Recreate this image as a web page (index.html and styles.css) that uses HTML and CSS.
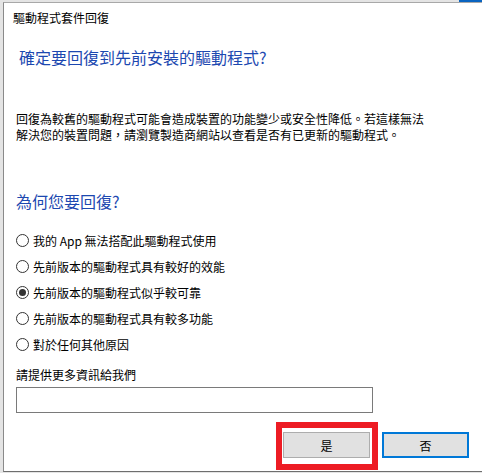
FILE: index.html
```html
<!DOCTYPE html>
<html lang="zh-Hant">
<head>
    <meta charset="UTF-8">
    <meta name="viewport" content="width=device-width, initial-scale=1.0">
    <title>驅動程式套件回復</title>
    <link rel="stylesheet" href="styles.css">
</head>
<body>
    <div class="topbar"><span class="accent"></span></div>
    <div class="window">
        <div class="title">驅動程式套件回復</div>
        <div class="heading">確定要回復到先前安裝的驅動程式?</div>
        <p class="desc">回復為較舊的驅動程式可能會造成裝置的功能變少或安全性降低。若這樣無法<br>解決您的裝置問題，請瀏覽製造商網站以查看是否有已更新的驅動程式。</p>
        <div class="subheading">為何您要回復?</div>
        <div class="reasons">
            <label class="reason"><input type="radio" name="reason">我的 App 無法搭配此驅動程式使用</label>
            <label class="reason"><input type="radio" name="reason">先前版本的驅動程式具有較好的效能</label>
            <label class="reason"><input type="radio" name="reason" checked>先前版本的驅動程式似乎較可靠</label>
            <label class="reason"><input type="radio" name="reason">先前版本的驅動程式具有較多功能</label>
            <label class="reason"><input type="radio" name="reason">對於任何其他原因</label>
        </div>
        <div class="more-label">請提供更多資訊給我們</div>
        <input type="text" class="more-input">
        <div class="actions">
            <div class="highlight"><button class="button">是</button></div>
            <button class="button button_default">否</button>
        </div>
    </div>
</body>
</html>
```

FILE: styles.css
```css
body {
    margin: 0;
    background-color: #e4e4e4;
    font-family: "Noto Sans CJK TC", "Noto Sans", sans-serif;
    font-size: 12px;
    color: #000;
}
.topbar {
    height: 2px;
    display: flex;
}
.accent {
    margin-left: auto;
    width: 23px;
    background-color: #0a64c0;
}
.window {
    margin-left: 3px;
    height: 468px;
    background-color: #fff;
    border-left: 1px solid #8a8a8a;
    border-top: 1px solid #a8a8a8;
    border-bottom: 1px solid #6e6e6e;
    padding-left: 12px;
    box-sizing: content-box;
    display: flex;
    flex-direction: column;
}
.title {
    margin-top: 5px;
    margin-left: -3px;
    line-height: 20px;
}
.heading {
    margin-top: 18px;
    margin-left: 3px;
    font-size: 16px;
    line-height: 22px;
    color: #1c48b0;
}
.desc {
    margin: 43px 0 0;
    line-height: 16px;
}
.subheading {
    margin-top: 47px;
    font-size: 16px;
    line-height: 22px;
    color: #1c48b0;
}
.reasons {
    margin-top: 15px;
    display: flex;
    flex-direction: column;
}
.reason {
    height: 26px;
    display: flex;
    align-items: center;
    gap: 4px;
}
.reason input {
    appearance: none;
    margin: 0;
    width: 13px;
    height: 13px;
    border: 1px solid #333;
    border-radius: 50%;
    background-color: #fff;
    display: flex;
    align-items: center;
    justify-content: center;
}
.reason input:checked::after {
    content: "";
    width: 7px;
    height: 7px;
    border-radius: 50%;
    background-color: #333;
}
.more-label {
    margin-top: 10px;
    line-height: 16px;
}
.more-input {
    margin-top: 4px;
    width: 357px;
    height: 26px;
    box-sizing: border-box;
    border: 1px solid #7a7a7a;
    padding: 0 4px;
    font-family: inherit;
}
.actions {
    margin-top: 9px;
    margin-right: 13px;
    display: flex;
    justify-content: flex-end;
    align-items: flex-start;
    gap: 4px;
}
.highlight {
    border: 6px solid #ed1c24;
    padding: 4px 2px 6px 1px;
}
.button {
    width: 87px;
    height: 26px;
    background-color: #e1e1e1;
    border: 1px solid #adadad;
    font-family: inherit;
    font-size: 12px;
    color: #000;
    padding: 0;
    cursor: pointer;
    display: block;
}
.button_default {
    margin-top: 10px;
    border: 2px solid #0078d7;
}
```
